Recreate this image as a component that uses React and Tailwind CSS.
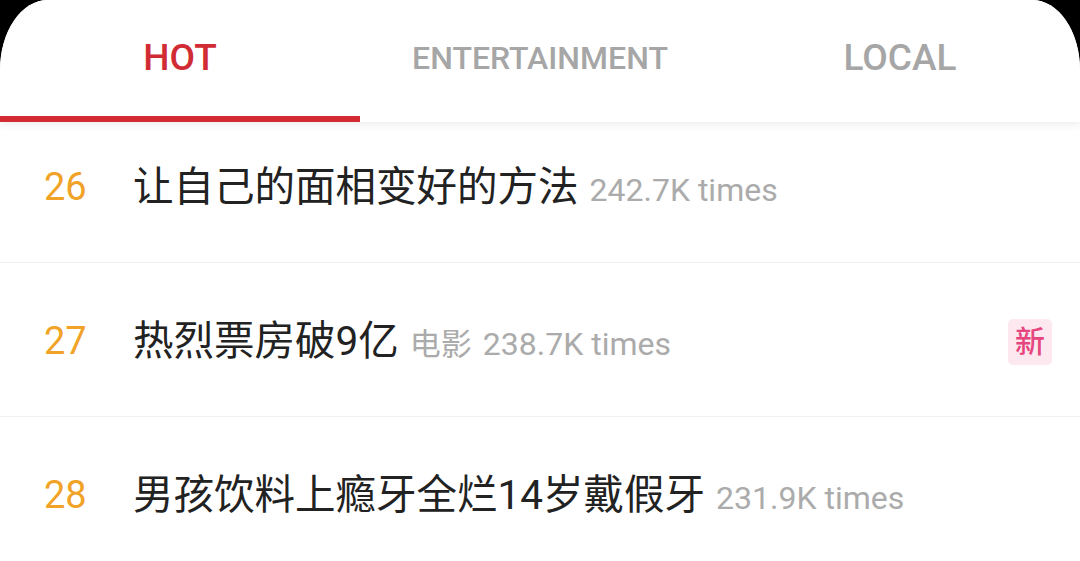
const rows = [
    { rank: 26, title: '让自己的面相变好的方法', times: '242.7K times' },
    { rank: 27, title: '热烈票房破9亿', tag: '电影', times: '238.7K times', badge: '新' },
    { rank: 28, title: '男孩饮料上瘾牙全烂14岁戴假牙', times: '231.9K times' },
];

const tabs = [
    { label: 'HOT', active: true },
    { label: 'ENTERTAINMENT', small: true },
    { label: 'LOCAL' },
];

export default function App() {
    return (
        <div className="w-[1080px] h-[561px] bg-black overflow-hidden" style={{ fontFamily: 'Roboto, "Noto Sans CJK SC", sans-serif' }}>
            <div className="h-full bg-white rounded-tl-[48px_70px] rounded-tr-[48px_70px] overflow-hidden flex flex-col">
                {/* Tabs */}
                <div className="relative z-10 bg-white shadow-[0_3px_8px_rgba(0,0,0,0.07)]">
                    <div className="grid grid-cols-3 h-[116px]">
                        {tabs.map(t => (
                            <div key={t.label} className="flex items-center justify-center">
                                <span
                                    className={`font-medium ${t.small ? 'text-[32px]' : 'text-[37px]'} ${t.active ? 'text-[#d12b33]' : 'text-[#a6a6a6]'}`}
                                >
                                    {t.label}
                                </span>
                            </div>
                        ))}
                    </div>
                    <div className="grid grid-cols-3 h-[6px]">
                        <div className="bg-[#d42a33]" />
                    </div>
                </div>

                {/* List */}
                <div className="-mt-[13px]">
                    {rows.map(r => (
                        <div key={r.rank} className="h-[154px] flex items-center border-b border-[#f0f0f0] pt-[4px] pl-[44px] pr-[28px]">
                            <span className="w-[89px] text-[38px] text-[#f0a326]">{r.rank}</span>
                            <div className="flex-1 flex items-baseline gap-[11px]">
                                <span className="text-[40.5px] text-[#222]">{r.title}</span>
                                {r.tag && <span className="text-[31px] text-[#ababab]">{r.tag}</span>}
                                <span className="text-[32px] text-[#ababab]">{r.times}</span>
                            </div>
                            {r.badge && (
                                <span className="w-[44px] h-[46px] rounded-[5px] bg-[#fde8ef] text-[#e5467f] text-[30px] font-medium flex items-center justify-center">
                                    {r.badge}
                                </span>
                            )}
                        </div>
                    ))}
                </div>
            </div>
        </div>
    );
}
